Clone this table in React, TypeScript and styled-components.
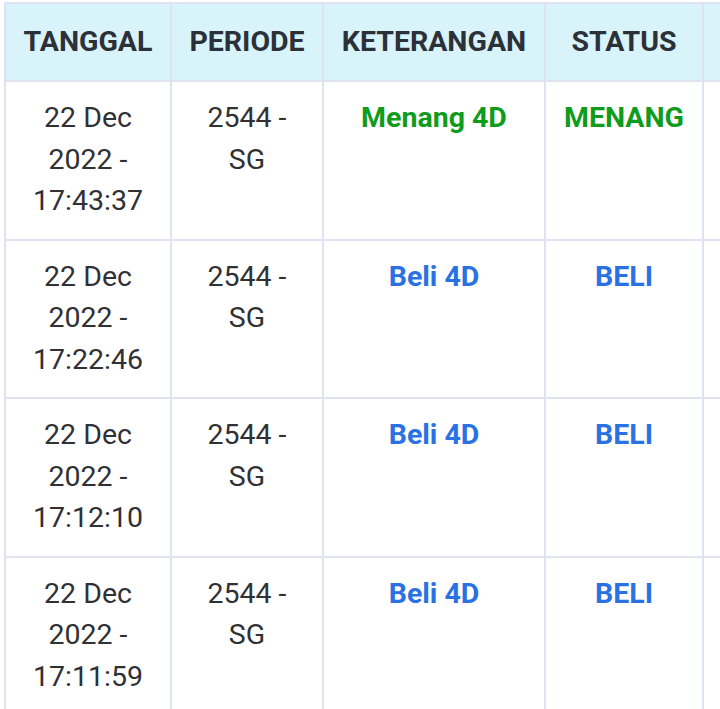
import styled, { createGlobalStyle } from "styled-components";

const GlobalStyle = createGlobalStyle`
html, body {
    margin: 0;
    padding: 0;
    background: #ffffff;
    overflow: hidden;
}
body {
    font-family: Roboto, "Liberation Sans", Arial, sans-serif;
}
`

const TableWrap = styled.div`
padding: 2px 0 0 4px;
width: 720px;
overflow: hidden;
`

const Table = styled.table`
border-collapse: collapse;
table-layout: fixed;
width: 868px;
border: 2px solid #dfe2f0;
`

const HeadCell = styled.th<{ $w: number }>`
width: ${p => p.$w}px;
box-sizing: border-box;
background: #d9f3fb;
color: #2c3038;
font-size: 28.5px;
font-weight: 700;
line-height: 42px;
padding: 17px 0 17px;
text-align: center;
border: 2px solid #dfe2f0;
white-space: nowrap;
`

const Cell = styled.td<{ $tone?: "green" | "blue" }>`
vertical-align: top;
text-align: center;
font-size: 28.5px;
line-height: 41.5px;
padding: 15px 12px 17px;
border: 2px solid #dfe2f0;
color: ${p => p.$tone === "green" ? "#0f9b1c" : p.$tone === "blue" ? "#2a72e4" : "#303134"};
font-weight: ${p => p.$tone ? 700 : 400};
`

const columns = [
    { label: "TANGGAL", w: 166 },
    { label: "PERIODE", w: 152 },
    { label: "KETERANGAN", w: 222 },
    { label: "STATUS", w: 158 },
    { label: "", w: 170 },
]

const rows = [
    { time: "17:43:37", ket: "Menang 4D", status: "MENANG", tone: "green" as const },
    { time: "17:22:46", ket: "Beli 4D", status: "BELI", tone: "blue" as const },
    { time: "17:12:10", ket: "Beli 4D", status: "BELI", tone: "blue" as const },
    { time: "17:11:59", ket: "Beli 4D", status: "BELI", tone: "blue" as const },
]

const App = () => {
    return (
        <>
            <GlobalStyle />
            <TableWrap>
                <Table>
                    <thead>
                        <tr>
                            {columns.map((c, i) => (
                                <HeadCell key={i} $w={c.w}>{c.label}</HeadCell>
                            ))}
                        </tr>
                    </thead>
                    <tbody>
                        {rows.map(r => (
                            <tr key={r.time}>
                                <Cell>22 Dec<br />2022 -<br />{r.time}</Cell>
                                <Cell>2544 -<br />SG</Cell>
                                <Cell $tone={r.tone}>{r.ket}</Cell>
                                <Cell $tone={r.tone}>{r.status}</Cell>
                                <Cell></Cell>
                            </tr>
                        ))}
                    </tbody>
                </Table>
            </TableWrap>
        </>
    )
}

export default App;
